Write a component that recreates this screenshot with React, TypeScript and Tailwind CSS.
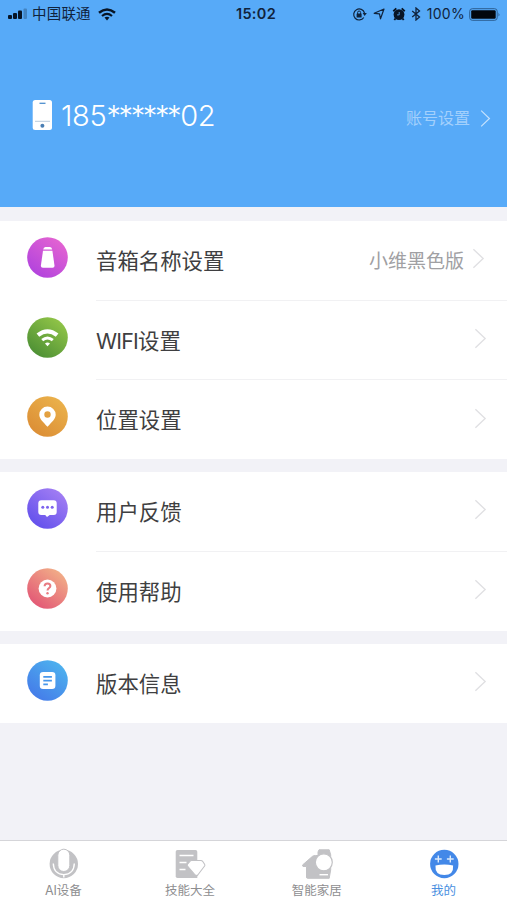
import React from 'react';

interface RowProps {
    icon: React.ReactNode;
    label: React.ReactNode;
    value?: string;
    divider?: boolean;
}

interface CircleIconProps {
    id: string;
    from: string;
    to: string;
    children: React.ReactNode;
}

// Round gradient badge, light at the top right and dark at the bottom left
const CircleIcon: React.FC<CircleIconProps> = ({ id, from, to, children }) => (
    <svg viewBox="0 0 41 41" className="w-[41px] h-[41px] shrink-0">
        <defs>
            <linearGradient id={id} x1="0.8" y1="0.1" x2="0.2" y2="0.9">
                <stop offset="0" stopColor={from} />
                <stop offset="1" stopColor={to} />
            </linearGradient>
        </defs>
        <circle cx="20.5" cy="20.5" r="20.3" fill={`url(#${id})`} />
        {children}
    </svg>
);

const SpeakerIcon = () => (
    <CircleIcon id="speaker" from="#e262d2" to="#b344dd">
        <path d="M16.2 12.6Q16.6 10 18.4 10H23Q24.8 10 25.2 12.6Z" fill="#fff" />
        <path d="M16 13.8H25.4L27.5 28.6Q27.7 30.8 25.6 30.8H15.8Q13.7 30.8 13.9 28.6Z" fill="#fff" />
    </CircleIcon>
);

const WifiIcon = () => (
    <CircleIcon id="wifi" from="#8fc347" to="#4f9135">
        <g fill="none" stroke="#fff">
            <path d="M10.9 18.2Q20.5 10.4 30.1 18.2" strokeWidth="4.2" />
            <path d="M15.2 23.2Q20.5 18.8 25.8 23.2" strokeWidth="3" />
        </g>
        <path d="M20.5 29.3L18 26.5Q20.5 24.3 23 26.5Z" fill="#fff" />
    </CircleIcon>
);

const PinIcon = () => (
    <CircleIcon id="pin" from="#eab04a" to="#dc8f36">
        <path
            d="M20.5 30.7C16.5 26.3 12.3 22.8 12.3 18.7a8.2 8.2 0 0 1 16.4 0C28.7 22.8 24.5 26.3 20.5 30.7zM20.5 15.3a3.2 3.2 0 1 0 0 6.4a3.2 3.2 0 0 0 0-6.4z"
            fill="#fff"
            fillRule="evenodd"
        />
    </CircleIcon>
);

const ChatIcon = () => (
    <CircleIcon id="chat" from="#a07cf3" to="#6552ec">
        <path d="M14.3 12.3h12.4q3 0 3 3v8.8q0 3-3 3h-4l-2.7 2-1.8-2h-3.9q-3 0-3-3v-8.8q0-3 3-3z" fill="#fff" />
        <g fill="#7d63ee">
            <circle cx="15.8" cy="19.2" r="1.5" />
            <circle cx="20.5" cy="19.2" r="1.5" />
            <circle cx="25.2" cy="19.2" r="1.5" />
        </g>
    </CircleIcon>
);

const HelpIcon = () => (
    <CircleIcon id="help" from="#f1ab87" to="#e35a76">
        <circle cx="20.5" cy="20.5" r="8.9" fill="#fff" />
        <path d="M17.6 18.3q0-2.8 2.9-2.8t2.9 2.5c0 2-2.9 2.1-2.9 4.6" fill="none" stroke="#e87b82" strokeWidth="2" />
        <circle cx="20.5" cy="25.2" r="1.2" fill="#e87b82" />
    </CircleIcon>
);

const DocIcon = () => (
    <CircleIcon id="doc" from="#4db0ee" to="#457de9">
        <rect x="12.8" y="12" width="15.6" height="17" rx="3.3" fill="#fff" />
        <path d="M16.3 16.9h8.6M16.3 20.6h8.6M16.3 24.3h4.6" stroke="#4797ec" strokeWidth="1.7" />
    </CircleIcon>
);

const Chevron: React.FC<{ className: string }> = ({ className }) => (
    <svg viewBox="0 0 14 24" fill="none" stroke="currentColor" className={className}>
        <path d="M1.5 2L12 12L1.5 22" strokeWidth="1.5" />
    </svg>
);

const StatusBar = () => (
    <div className="flex h-7 items-center justify-between pl-2 pr-[6px] text-[#10233c]">
        <div className="flex w-[200px] items-center">
            <svg viewBox="0 0 20 12" className="w-5 h-3">
                <rect x="0" y="7" width="4" height="4" rx="1" fill="#081526" />
                <rect x="5" y="5" width="4" height="6" rx="1" fill="#081526" />
                <rect x="10" y="2.5" width="4" height="8.5" rx="1" fill="#081526" />
                <rect x="15.5" y="0.5" width="3.5" height="10.5" rx="1" fill="#4283c1" />
            </svg>
            <span className="ml-1 text-[14.5px] leading-none tracking-[0.2px]">中国联通</span>
            <svg viewBox="0 0 18 13" className="ml-[7px] w-[18px] h-[13px]" fill="none" stroke="#081526">
                <path d="M1 4.8Q9-1.9 17 4.8" strokeWidth="2.5" />
                <path d="M4 8Q9 3.9 14 8" strokeWidth="2.2" />
                <path d="M9 12.5l-2.5-2.9q2.5-1.8 5 0z" fill="#081526" stroke="none" />
            </svg>
        </div>
        <span className="ml-[3px] text-[14.5px] font-semibold leading-none tracking-[0.3px]">15:02</span>
        <div className="flex w-[200px] items-center justify-end">
            <svg viewBox="0 0 16 14" className="w-4 h-[14px] shrink-0" fill="none" stroke="#10233c">
                <path d="M11.8 10.5A5.5 5.5 0 1 1 12.5 6" strokeWidth="1.2" />
                <path d="M10.6 6h4.2l-2.1 3z" fill="#10233c" stroke="none" />
                <rect x="4.6" y="6.6" width="5" height="3.8" rx="0.5" fill="#10233c" stroke="none" />
                <path d="M5.6 7V5.5q0-1.5 1.500-1.500t1.500 1.500V7" strokeWidth="1" />
            </svg>
            <svg viewBox="0 0 12 12" className="ml-[5px] w-3 h-3 shrink-0" fill="none" stroke="#10233c">
                <path d="M11 1L7.5 10.8L6.5 5.8L1.2 5.3z" strokeWidth="1.2" strokeLinejoin="round" />
            </svg>
            <svg viewBox="0 0 14 14" className="ml-[7px] w-[14px] h-[14px] shrink-0">
                <circle cx="7" cy="7.6" r="5.4" fill="#081526" />
                <path d="M1.3 4.2L4.3 1.4M12.7 4.2L9.7 1.4M3.5 11.5L2.3 13M10.5 11.5L11.7 13" stroke="#081526" strokeWidth="1.9" />
                <path d="M7.2 5v2.9H5" fill="none" stroke="#57aaf8" strokeWidth="0.8" />
            </svg>
            <svg viewBox="0 0 10 14" className="ml-[5px] w-[10px] h-[14px] shrink-0" fill="none" stroke="#10233c" strokeWidth="1.3">
                <path d="M1.2 4L8.5 10L5 13V1L8.5 4L1.2 10" />
            </svg>
            <span className="ml-[6px] text-[14px] leading-none tracking-[0.3px]">100%</span>
            <svg viewBox="0 0 32 13" className="ml-1 w-8 h-[13px] shrink-0">
                <rect x="0.7" y="0.7" width="27.5" height="11.6" rx="2.6" fill="none" stroke="#2c5e91" />
                <rect x="2.2" y="2.2" width="24.5" height="8.6" rx="1.2" fill="#02060c" />
                <path d="M29.5 4.5q1.8 2 0 4z" fill="#2c5e91" />
            </svg>
        </div>
    </div>
);

const Header = () => (
    <header className="h-[207px] bg-[#57aaf8]">
        <StatusBar />
        <div className="flex items-center pt-[67px] pl-8 pr-4 text-white">
            <svg viewBox="0 0 21 32" className="w-[21px] h-8">
                <rect x="0.7" y="1" width="19.3" height="30" rx="2.5" fill="#fff" />
                <path d="M7.5 4.3h6" stroke="#4f8fce" strokeWidth="1.3" />
                <path d="M3 22.3h15" stroke="#b9cbdc" strokeWidth="1" />
                <circle cx="10.4" cy="26.8" r="2" fill="#4b7fb4" />
            </svg>
            <span className="ml-[8px] flex h-10 items-center pt-px text-[29px] font-light leading-none tracking-[-0.3px]">
                185<span className="tracking-[-2.4px]">******</span>
                <span className="ml-px">02</span>
            </span>
            <span className="ml-auto pt-[6px] text-[16px] leading-none text-[#a3d0fc]">账号设置</span>
            <Chevron className="ml-[10px] mt-[6px] w-[11px] h-[19px] text-[#c6e2fd]" />
        </div>
    </header>
);

const Row: React.FC<RowProps> = ({ icon, label, value, divider }) => (
    <div className={`flex pl-[27px] ${divider ? 'h-[79.5px]' : 'h-[79px]'}`}>
        <div className="pt-4">{icon}</div>
        <div className={`ml-7 flex flex-1 items-center pr-5 ${divider ? 'border-b border-[#f1f1f3]' : ''}`}>
            <span className="pt-[3px] text-[21.4px] leading-none text-[#3f3f41]">{label}</span>
            {value && <span className="ml-auto mr-[8px] pt-[3px] text-[19px] leading-none text-[#a0a0a3]">{value}</span>}
            <Chevron className={`mb-[3px] w-[13px] h-[23px] text-[#e0e0e3] ${value ? 'mr-[2px]' : 'ml-auto'}`} />
        </div>
    </div>
);

const Tab: React.FC<{ label: string; active?: boolean; children: React.ReactNode }> = ({ label, active, children }) => (
    <div className={`flex flex-1 flex-col items-center pt-[7px] text-[12.5px] ${active ? 'text-[#4a8fdf]' : 'text-[#8e8e90]'}`}>
        <svg viewBox="0 0 32 32" className="w-8 h-8">
            {children}
        </svg>
        <span className="mt-[5px] leading-none">{label}</span>
    </div>
);

const TabBar = () => (
    <nav className="mt-auto flex h-[60px] border-t border-[#d5d5d9] bg-white">
        <Tab label="AI设备">
            <circle cx="16.8" cy="16" r="14.2" fill="#c2c2c5" />
            <rect x="10.8" y="1.2" width="12" height="22.3" rx="6" fill="#fff" stroke="#c2c2c5" />
            <path d="M6.3 15.5C6.5 23 11 26.6 16.8 26.6S27.1 23 27.3 15.5M16.8 26.6v3" fill="none" stroke="#fff" strokeWidth="1.4" />
        </Tab>
        <Tab label="技能大全">
            <path d="M3.5 2h18q1.8 0 1.8 1.8V30H3.5q-1.8 0-1.8-1.8V3.8Q1.7 2 3.5 2z" fill="#c2c2c5" />
            <path d="M5.5 7.500h14M5.500 14.500h7M5.500 21.500h6" stroke="#fff" strokeWidth="1.4" />
            <path d="M17.5 12.500h9.500q1 0 1.600.8l2 2.900q.6.9 0 1.800l-6.800 9q-1.300 1.300-2.600 0l-7.700-9q-.6-.9 0-1.800l2.400-2.900q.6-.8 1.600-.8z" fill="#fff" stroke="#c2c2c5" strokeWidth="1.1" />
        </Tab>
        <Tab label="智能家居">
            <path d="M1.5 17L11.5 8.300Q12.800 7.500 14.500 7.500H17V4L18 1.800H28.200L29.700 6.800V21.800L28.200 30.300H6.500Q5.500 30.300 5.500 29V18.500H2z" fill="#c2c2c5" stroke="#c2c2c5" strokeLinejoin="round" />
            <circle cx="22.8" cy="14.3" r="8.5" fill="#fff" stroke="#c2c2c5" strokeWidth="1.2" />
            <path d="M18.5 26.7h8.500" stroke="#fff" strokeWidth="1.4" />
        </Tab>
        <Tab label="我的" active>
            <circle cx="16.3" cy="16" r="14.2" fill="#4388e8" />
            <path d="M10.3 7.600v6.800M6.900 11h6.800M22.300 7.600v6.800M18.900 11h6.800" stroke="#dceafb" strokeWidth="1.4" />
            <path d="M7.5 17.500q8.800-2 17.600 0q.8 9.500-8.800 9.500T7.500 17.500z" fill="#fff" />
        </Tab>
    </nav>
);

const App: React.FC = () => {
    return (
        <div className="flex h-[900px] w-[507px] flex-col overflow-hidden bg-[#f2f2f7] font-['Inter','Noto_Sans_CJK_SC',sans-serif]">
            <Header />
            <main>
                <section className="mt-[14px] bg-white">
                    <Row icon={<SpeakerIcon />} label="音箱名称设置" value="小维黑色版" divider />
                    <Row
                        icon={<WifiIcon />}
                        label={
                            <>
                                <span className="tracking-[-0.8px]">WIFI</span>设置
                            </>
                        }
                        divider
                    />
                    <Row icon={<PinIcon />} label="位置设置" />
                </section>
                <section className="mt-[13px] bg-white">
                    <Row icon={<ChatIcon />} label="用户反馈" divider />
                    <Row icon={<HelpIcon />} label="使用帮助" />
                </section>
                <section className="mt-[13px] bg-white">
                    <Row icon={<DocIcon />} label="版本信息" />
                </section>
            </main>
            <TabBar />
        </div>
    );
};

export default App;
